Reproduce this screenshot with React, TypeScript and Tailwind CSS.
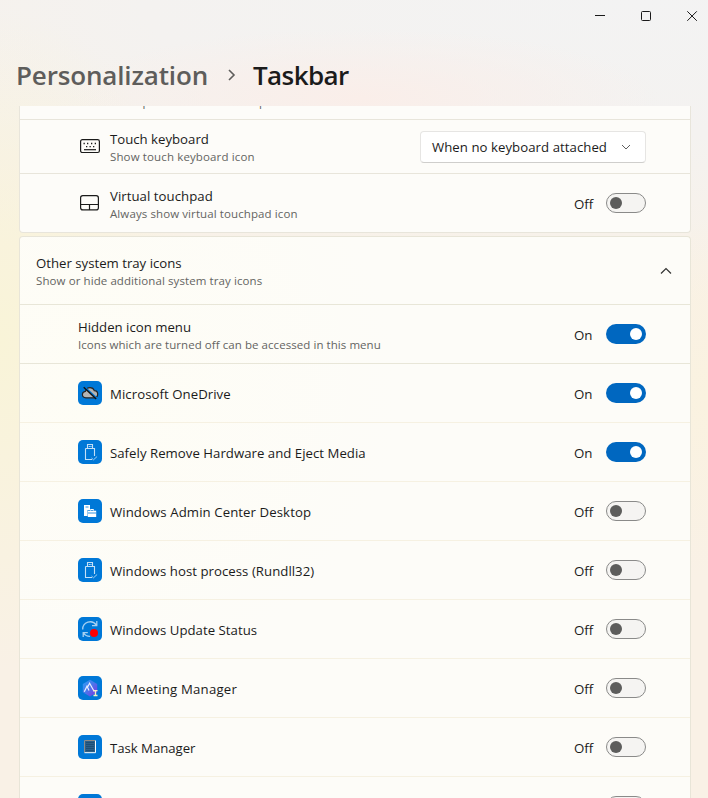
import type { ReactNode } from "react";

function Toggle({ on }: { on: boolean }) {
  return (
    <div className="flex shrink-0 items-center">
      <span className="w-8 pt-[2px] text-[13.3px] leading-5 text-[#1b1b1b]">{on ? "On" : "Off"}</span>
      {on ? (
        <span className="flex h-5 w-10 items-center justify-end rounded-full bg-[#0067c0] pr-1">
          <span className="size-3 rounded-full bg-white" />
        </span>
      ) : (
        <span className="flex h-5 w-10 items-center rounded-full border border-[#8a8a89] bg-[#f5f4f2] pl-[3px]">
          <span className="size-3 rounded-full bg-[#5d5d5c]" />
        </span>
      )}
    </div>
  );
}

function Label({ title, sub, titleClass = "", subClass = "" }: { title: string; sub: string; titleClass?: string; subClass?: string }) {
  return (
    <div className="flex flex-col whitespace-nowrap pt-px">
      <span className={`text-[13.2px] leading-5 text-[#1b1b1b] ${titleClass}`}>{title}</span>
      <span className={`text-[11.5px] leading-4 text-[#646462] ${subClass}`}>{sub}</span>
    </div>
  );
}

function AppTile({ children }: { children?: ReactNode }) {
  return (
    <span className="flex size-6 shrink-0 items-center justify-center rounded-[5px] bg-[#0078d7]">
      <svg viewBox="0 0 24 24" className="size-6" fill="none">
        {children}
      </svg>
    </span>
  );
}

const usb = (
  <g stroke="#c4e0f7">
    <path d="M9.500 8.500v-4h5v4M7.500 8.500h9v7.500M7.500 8.500v11h6.500" strokeWidth="1.100" />
    <path d="M10.800 6.500h.9M12.500 6.500h.9" stroke="#fff" />
    <path d="M13.500 18l2 1.800 3.600-3.300" stroke="#9dcdf2" />
  </g>
);

const cloud = (
  <g>
    <path d="M8 16.800c-2.200 0-3.600-1.400-3.600-3.200 0-1.700 1.200-3 3-3.200C8 8 9.600 6.600 12 6.600c2.200 0 3.700 1.200 4.300 3 2 .1 3.400 1.600 3.400 3.500 0 2.100-1.500 3.700-3.500 3.700z" fill="#b4b4b4" stroke="#262626" strokeWidth="1.200" />
    <path d="M7 6.300l12.300 11.200" stroke="#0078d7" strokeWidth="1.600" />
    <path d="M5.700 6.300l12.500 11.800" stroke="#111" strokeWidth="1.400" />
  </g>
);

const server = (
  <g>
    <path d="M6 6h6v5h-2.500v6H6z" fill="#fff" />
    <path d="M7.500 8h3" stroke="#0078d7" strokeWidth=".8" />
    <path d="M12.500 11.500v-1h3v1" stroke="#fff" />
    <path d="M9.800 11.700h8.400v6.300H9.800z" fill="#fff" />
    <path d="M10 14h8" stroke="#0078d7" strokeWidth=".8" />
  </g>
);

const update = (
  <g>
    <g stroke="#a5d0f2" strokeWidth="1.300">
      <path d="M4.700 12.500a7.500 7.500 0 0 1 13.600-4.500M18.800 4v4.700h-4.800" />
      <path d="M12 19.300a7.500 7.500 0 0 1-6.500-3.500M5.200 20v-4.400h4.600" />
    </g>
    <circle cx="16" cy="16" r="4" fill="#ff0000" />
  </g>
);

const meeting = (
  <g>
    <defs>
      <linearGradient id="hex" x1="0" y1="0" x2="1" y2="1">
        <stop offset="0" stopColor="#2aa0f5" />
        <stop offset=".5" stopColor="#4c74ea" />
        <stop offset="1" stopColor="#8a2be0" />
      </linearGradient>
    </defs>
    <path d="M12 3.800l7.200 4.100v8.400L12 20.600l-7.200-4.300V7.900z" fill="url(#hex)" />
    <path d="M6.300 15.800l2.700-5.600 2 4.400M9.800 10.800l1.800-3.600 4.600 8.300" stroke="#e9eeff" strokeWidth="1.200" />
    <path d="M15.500 14.700h4M15.500 19.500h4M17.500 15v4" stroke="#f5edc8" strokeWidth="1.300" />
  </g>
);

const task = (
  <g>
    <path d="M6.500 5.500h10.500v12H6.500z" fill="#2c6089" />
    <path d="M8.500 7.500h8M8.500 9.500h8M8.500 11.500h8M8.500 13.500h8M8.500 15.500h8" stroke="#123c5e" strokeDasharray="1 1" />
    <path d="M6.500 17.500v-12h10.500" stroke="#8f8c88" />
    <path d="M17.500 5.500v12.200H6.500" stroke="#fff" />
  </g>
);

const apps = [
  { name: "Microsoft OneDrive", on: true, icon: cloud, fit: "tracking-[0.06px]" },
  { name: "Safely Remove Hardware and Eject Media", on: true, icon: usb, fit: "tracking-[0.03px]" },
  { name: "Windows Admin Center Desktop", on: false, icon: server, fit: "tracking-[0.09px]" },
  { name: "Windows host process (Rundll32)", on: false, icon: usb, fit: "tracking-[0.04px]" },
  { name: "Windows Update Status", on: false, icon: update, fit: "tracking-[0.03px]" },
  { name: "AI Meeting Manager", on: false, icon: meeting, fit: "tracking-[0.2px]" },
  { name: "Task Manager", on: false, icon: task, fit: "tracking-[-0.03px]" },
];

const rowClass = "flex h-[59px] items-center justify-between border-b border-[#f6f1e2] pl-[58px] pr-11";

export default function App() {
  return (
    <div className="flex h-[798px] w-[708px] flex-col overflow-hidden bg-[#f9f1e6] bg-[radial-gradient(ellipse_300px_70px_at_360px_98px,#faeee9_0%,#faeee900_100%),radial-gradient(ellipse_200px_330px_at_0px_340px,#f9f4d8_0%,#f9f4d800_100%),radial-gradient(ellipse_150px_180px_at_708px_400px,#faf2e0_0%,#faf2e000_100%),radial-gradient(ellipse_1100px_300px_at_640px_0px,#f3f3f3_0%,#f4f2f0_45%,#f4f2f000_100%)] font-['Open_Sans','Noto_Sans',sans-serif]">
      <div className="flex h-8 shrink-0 justify-end">
        <svg viewBox="0 0 138 32" className="h-8 w-[138px]" fill="none" stroke="#1a1a1a">
          <path d="M25 15.500h10" />
          <rect x="71.500" y="11.500" width="9" height="9" rx="1" />
          <path d="M117.300 11.300l9.500 9.500M126.800 11.300l-9.500 9.500" />
        </svg>
      </div>
      <div className="flex h-[74px] shrink-0 items-start pl-4 pt-[23px] text-[26px] leading-10 font-semibold">
        <span className="w-[211px] tracking-[-0.15px] text-[#5e5d5b]">Personalization</span>
        <svg viewBox="0 0 26 40" className="h-10 w-[26px]" fill="none" stroke="#5e5d5b" strokeWidth="1.600">
          <path d="M2 15l5 5-5 5" />
        </svg>
        <span className="tracking-[-0.6px] text-[#1b1b1b]">Taskbar</span>
      </div>
      <div className="flex min-h-0 flex-1 flex-col overflow-hidden pl-[19px] pr-[17px]">
        <div className="h-[127px] shrink-0 rounded-b-[4px] border border-t-0 border-[#e8e5db] bg-[#fdfcf9]">
          <div className="flex h-[14px] items-end border-b border-[#e8e5db] pb-[9px] pl-[90px]">
            <span className="text-[11.5px] leading-4 tracking-[0.05px] text-[#646462]">Show pen menu icon when pen is in use</span>
          </div>
          <div className="flex h-[54px] items-center justify-between border-b border-[#e8e5db] pl-[60px] pr-11">
            <div className="flex items-center">
              <svg viewBox="0 0 20 16" className="mr-[10px] h-4 w-5" fill="none" stroke="#1b1b1b">
                <rect x=".6" y=".6" width="18.800" height="12.900" rx="1.800" strokeWidth="1.200" />
                <path d="M3.500 4.500h1.300M7 4.500h1.300M11 4.500h1.300M14.700 4.500h1.300M6 7.700h1.300M9.500 7.700h1.300M13 7.700h1.300" strokeWidth="1.300" />
                <path d="M4 10.700h12" strokeWidth="1.200" />
              </svg>
              <Label title="Touch keyboard" sub="Show touch keyboard icon" subClass="tracking-[0.13px]" />
            </div>
            <div className="flex h-8 w-[226px] items-center justify-between rounded-[4px] border border-[#e6e5e3] border-b-[#cfcecc] bg-white pl-[11px] pr-[14px]">
              <span className="whitespace-nowrap text-[13.2px] leading-5 tracking-[0.05px] text-[#1b1b1b]">When no keyboard attached</span>
              <svg viewBox="0 0 10 8" className="h-2 w-[10px]" fill="none" stroke="#5f5f5f">
                <path d="M1 2l4 4 4-4" />
              </svg>
            </div>
          </div>
          <div className="flex h-[58px] items-center justify-between pl-[60px] pr-11">
            <div className="flex items-center">
              <svg viewBox="0 0 20 16" className="mr-[10px] h-4 w-5" fill="none" stroke="#1b1b1b" strokeWidth="1.200">
                <rect x=".6" y=".7" width="17.800" height="14.200" rx="2.200" />
                <path d="M.6 9.500h17.800M9.500 9.500v5.500" />
              </svg>
              <Label title="Virtual touchpad" sub="Always show virtual touchpad icon" titleClass="tracking-[0.05px]" subClass="tracking-[0.1px]" />
            </div>
            <Toggle on={false} />
          </div>
        </div>
        <div className="mt-[3px] shrink-0 rounded-t-[4px] border border-b-0 border-[#e8e5d8] bg-[#fdfcf8] bg-[radial-gradient(ellipse_320px_300px_at_60px_150px,#fefdf5_0%,#fefdf500_100%)]">
          <div className="flex h-[68px] items-center justify-between border-b border-[#e8e6d8] pl-4 pr-[18px]">
            <Label title="Other system tray icons" sub="Show or hide additional system tray icons" subClass="tracking-[0.09px]" />
            <svg viewBox="0 0 12 8" className="h-2 w-3" fill="none" stroke="#333" strokeWidth="1.200">
              <path d="M1 6.500l5-5 5 5" />
            </svg>
          </div>
          <div className="flex h-[59px] items-center justify-between border-b border-[#e8e6d8] pl-[58px] pr-11">
            <Label title="Hidden icon menu" sub="Icons which are turned off can be accessed in this menu" subClass="tracking-[0.06px]" />
            <Toggle on />
          </div>
          {apps.map((app) => (
            <div key={app.name} className={rowClass}>
              <div className="flex items-center gap-2">
                <AppTile>{app.icon}</AppTile>
                <span className={`whitespace-nowrap pt-[2px] text-[13.2px] leading-5 text-[#1b1b1b] ${app.fit}`}>{app.name}</span>
              </div>
              <Toggle on={app.on} />
            </div>
          ))}
          <div className={rowClass}>
            <AppTile />
            <span className="h-5 w-10 rounded-full border border-[#8a8a89] bg-[#f5f4f2]" />
          </div>
        </div>
      </div>
    </div>
  );
}
